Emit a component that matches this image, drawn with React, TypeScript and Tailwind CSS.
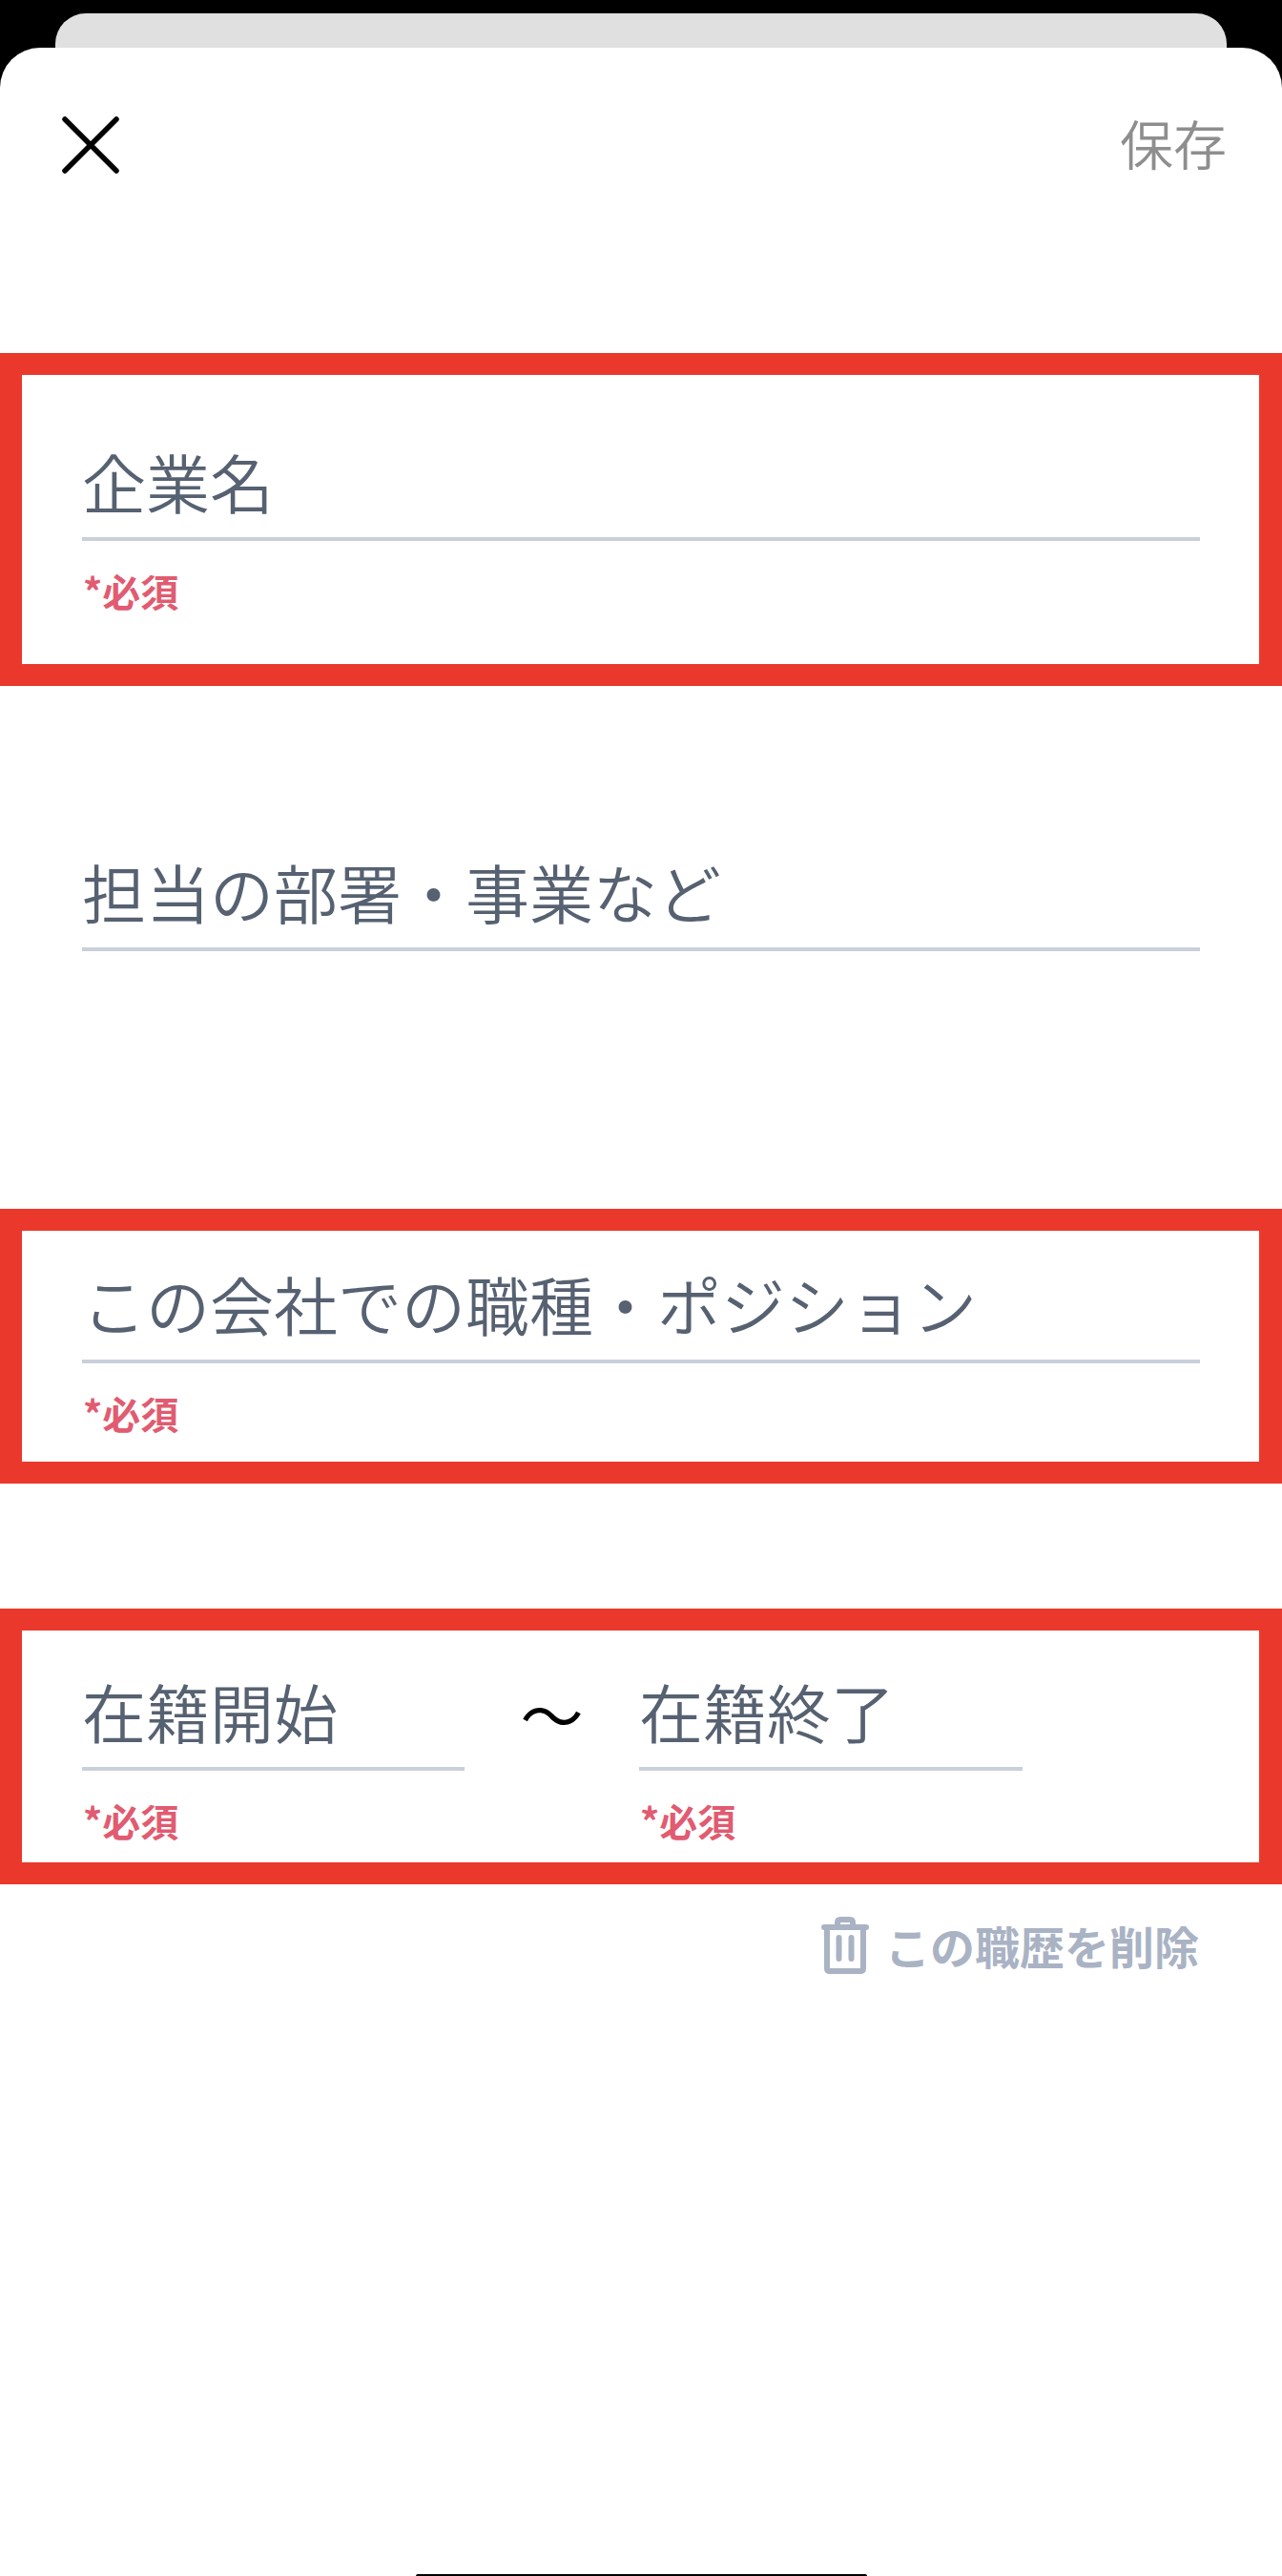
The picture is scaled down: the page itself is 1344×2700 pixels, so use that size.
import React from 'react';

const FONT = "font-['Noto_Sans_CJK_JP','Noto_Sans',sans-serif]";

const Required = () => (
  <div className="mt-[27px] ml-[1px] h-[50px] text-[40px] leading-[50px] font-bold text-[#e15b71]">*必須</div>
);

const FieldLabel: React.FC<{ label: string }> = ({ label }) => (
  <div className="h-[99px] border-b-[4px] border-[#c9d0dc] pb-[23px] text-[67px] leading-[72px] font-[350] whitespace-nowrap text-[#566171]">
    {label}
  </div>
);

const RedBox: React.FC<{ className: string; children: React.ReactNode }> = ({ className, children }) => (
  <div className={`border-[23px] border-r-[24px] border-[#ea392c] ${className}`}>{children}</div>
);

const TrashIcon = () => (
  <svg width="50" height="60" viewBox="0 0 50 60" fill="none" stroke="#a9b3c4" strokeWidth="6" strokeLinecap="round" strokeLinejoin="round">
    <path d="M3 11H47" />
    <path d="M17 10V6Q17 3 20 3H30Q33 3 33 6V10" />
    <path d="M6 11V54Q6 57 9 57H41Q44 57 44 54V11" />
    <path d="M18.5 22V44M31.5 22V44" />
  </svg>
);

export default function App() {
  return (
    <div className={`flex h-[2700px] flex-col overflow-hidden bg-black pt-[14px] ${FONT}`}>
      <div className="mx-[58px] h-[36px] shrink-0 rounded-t-[32px] bg-[#e0e0e0]" />
      <div className="flex flex-1 flex-col rounded-t-[42px] bg-white">
        <div className="flex h-[320px] items-start justify-between pt-[72px] pr-[58px] pl-[65px]">
          <svg width="60" height="60" viewBox="0 0 60 60" stroke="#000" strokeWidth="5.5" strokeLinecap="round">
            <path d="M3 3L57 57M57 3L3 57" />
          </svg>
          <span className="text-[56px] leading-[54px] font-[350] text-[#8e8e8e]">保存</span>
        </div>

        <RedBox className="pt-[75px] pr-[62px] pb-[52px] pl-[63px]">
          <FieldLabel label="企業名" />
          <Required />
        </RedBox>

        <div className="mt-[179px] px-[86px]">
          <FieldLabel label="担当の部署・事業など" />
        </div>

        <RedBox className="mt-[270px] pt-[40px] pr-[62px] pb-[26px] pl-[63px]">
          <FieldLabel label="この会社での職種・ポジション" />
          <Required />
        </RedBox>

        <RedBox className="mt-[131px] pt-[48px] pr-[62px] pb-[19px] pl-[63px]">
          <div className="flex items-start">
            <div className="w-[401px]">
              <FieldLabel label="在籍開始" />
              <Required />
            </div>
            <div className="flex w-[183px] justify-center pt-[8px] text-[66px] leading-[60px] text-black">〜</div>
            <div className="w-[402px]">
              <FieldLabel label="在籍終了" />
              <Required />
            </div>
          </div>
        </RedBox>

        <div className="mt-[34px] flex items-center justify-end gap-[17px] pr-[87px]">
          <TrashIcon />
          <span className="text-[47px] leading-[60px] font-bold text-[#a9b3c4]">この職歴を削除</span>
        </div>

        <div className="mt-auto flex justify-center">
          <div className="h-[2px] w-[473px] rounded-t-full bg-black" />
        </div>
      </div>
    </div>
  );
}
